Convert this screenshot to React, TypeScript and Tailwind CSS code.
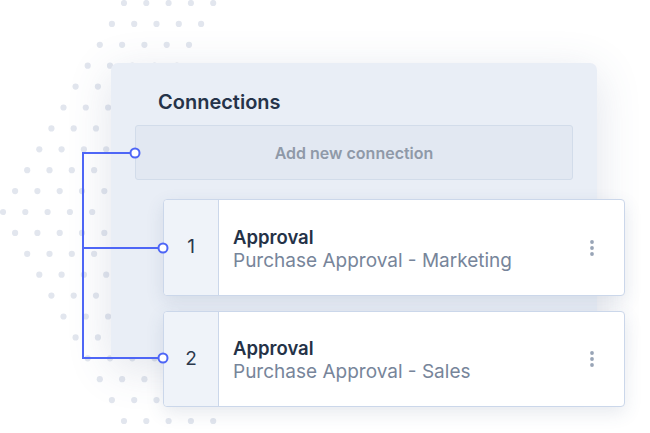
import React from 'react';

type Connection = { id: number; title: string; subtitle: string };

const connections: Connection[] = [
  { id: 1, title: 'Approval', subtitle: 'Purchase Approval - Marketing' },
  { id: 2, title: 'Approval', subtitle: 'Purchase Approval - Sales' },
];

// background dot field: chevron shape, 21 rows of 5 dots
const DotField: React.FC = () => {
  const dots: { x: number; y: number }[] = [];
  for (let i = 0; i <= 20; i++) {
    const y = 3 + i * 20.9;
    const start = 3 + Math.abs(i - 10) * 12.1;
    for (let j = 0; j < 5; j++) dots.push({ x: start + j * 22.3, y });
  }
  return (
    <svg className="absolute inset-0" width="650" height="433">
      {dots.map((d, k) => (
        <circle key={k} cx={d.x} cy={d.y} r="3.1" fill="#e2e6ee" />
      ))}
    </svg>
  );
};

const Connectors: React.FC = () => (
  <svg className="absolute inset-0 z-20 pointer-events-none" width="650" height="433">
    <g fill="none" stroke="#4e66f6" strokeWidth="2">
      <path d="M135 153 H83 V358 H163" />
      <path d="M83 248 H163" />
    </g>
    {[
      [135, 153],
      [163, 248],
      [163, 358],
    ].map(([x, y]) => (
      <circle key={`${x}-${y}`} cx={x} cy={y} r="4.5" fill="#fff" stroke="#4e66f6" strokeWidth="2" />
    ))}
  </svg>
);

const Kebab: React.FC = () => (
  <svg width="8" height="18" viewBox="0 0 8 18">
    <circle cx="4" cy="3" r="1.9" fill="#98a4b6" />
    <circle cx="4" cy="9" r="1.9" fill="#98a4b6" />
    <circle cx="4" cy="15" r="1.9" fill="#98a4b6" />
  </svg>
);

const ConnectionCard: React.FC<{ item: Connection; className?: string }> = ({ item, className }) => (
  <div
    className={`ml-[52px] w-[462px] flex bg-white border border-[#cbd7ea] rounded-[4px] shadow-[0_6px_18px_rgba(60,80,120,0.12)] ${className ?? ''}`}
  >
    <div className="w-[55px] shrink-0 flex items-center justify-center bg-[#eff3f9] border-r border-[#cbd7ea] rounded-l-[4px] text-[19px] text-[#2b384c]">
      {item.id}
    </div>
    <div className="flex-1 flex items-center justify-between pl-[14px] pr-[28px]">
      <div className="flex flex-col pt-[3px]">
        <span className="text-[18.5px] font-semibold leading-[22px] text-[#243247]">{item.title}</span>
        <span className="text-[19px] leading-[25px] text-[#77859a]">{item.subtitle}</span>
      </div>
      <Kebab />
    </div>
  </div>
);

export default function App() {
  return (
    <div className="relative w-[650px] h-[433px] overflow-hidden bg-white pt-[63px] pl-[111px] font-['Inter',sans-serif]">
      <DotField />
      <div className="relative z-10 w-[486px] h-[295px] bg-[#e9eef6] rounded-t-[7px] rounded-b-[3px] shadow-[0_10px_45px_rgba(70,90,130,0.16)] pt-[25px]">
        <h2 className="pl-[47px] text-[20px] leading-[28px] font-semibold text-[#253349]">Connections</h2>
        <div className="mt-[9px] mx-[24px] h-[55px] flex items-center justify-center bg-[#e2e8f2] border border-[#d2dcea] rounded-[3px] text-[16px] font-semibold text-[#8f99a8]">
          Add new connection
        </div>
        <ConnectionCard item={connections[0]} className="mt-[19px] h-[97px]" />
        <ConnectionCard item={connections[1]} className="mt-[15px] h-[96px]" />
      </div>
      <Connectors />
    </div>
  );
}
